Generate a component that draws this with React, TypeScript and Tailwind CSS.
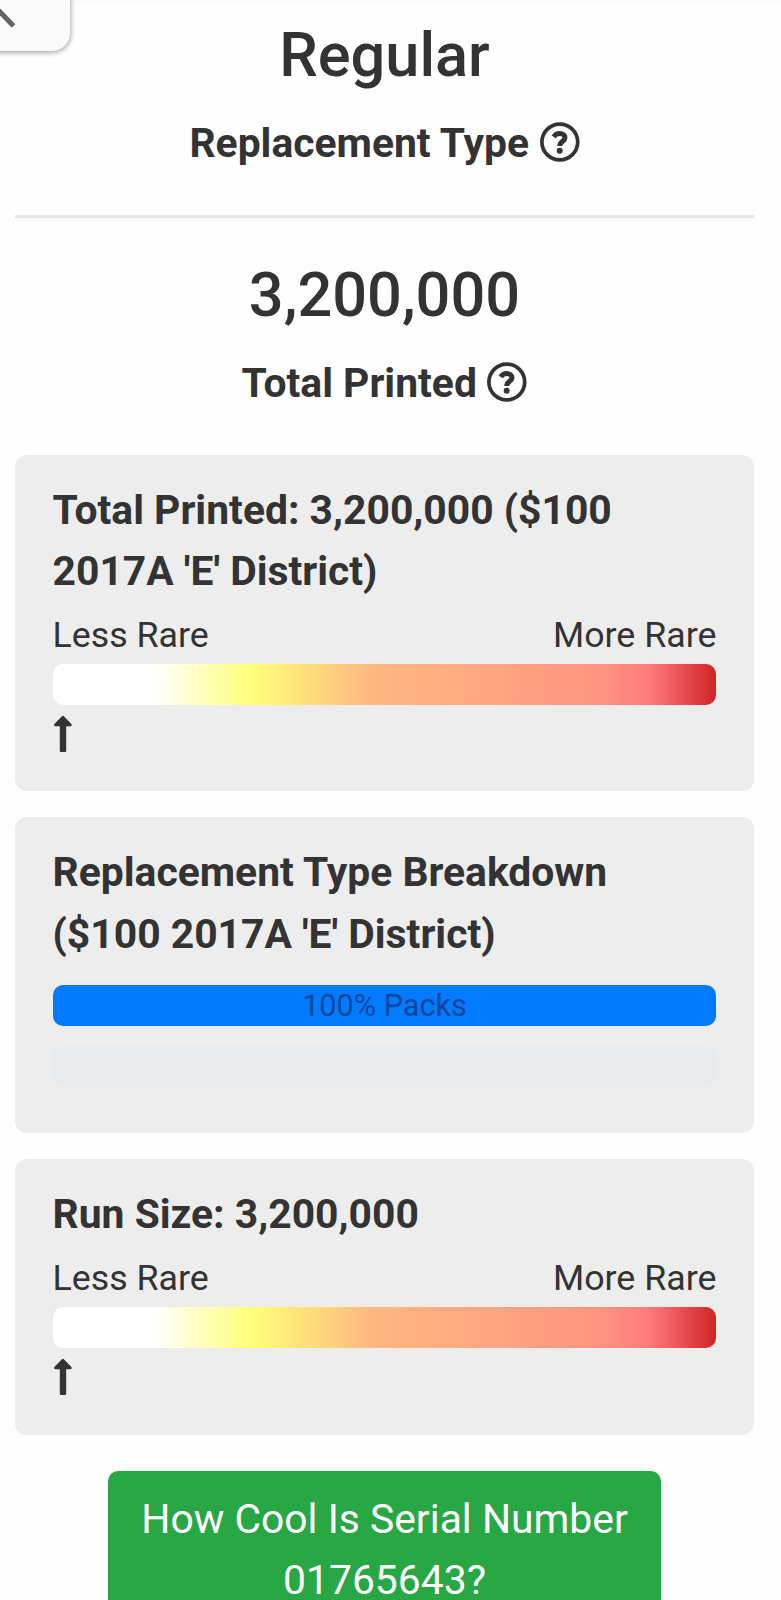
import type { ReactNode } from "react";

function HelpIcon() {
  return (
    <svg className="ml-[10.5px] size-[40px] -translate-y-[2px]" viewBox="0 0 40 40" fill="none" stroke="currentColor">
      <circle cx="19.8" cy="20" r="17.9" strokeWidth="3.7" />
      <path d="M13.7 14.9 C15.2 12.7 17.2 11.6 19.8 11.6 C22.8 11.6 25 13.3 25 15.7 C25 19.3 19.7 19.2 19.7 24" strokeWidth="5" />
      <circle cx="19.7" cy="28.8" r="3" fill="currentColor" stroke="none" />
    </svg>
  );
}

function Pointer() {
  return (
    <svg className="mt-[9px] h-[41px] w-[20px]" viewBox="0 0 20 41" fill="currentColor">
      <path d="M9.2 2 Q9.9 1.3 10.6 2 L18.2 9.8 Q19 10.8 18.6 11.5 Q18.3 12.3 17.4 12.3 H13.2 V37 Q13.2 38 12.2 38 H7.8 Q6.8 38 6.8 37 V12.3 H2.4 Q1.5 12.3 1.2 11.5 Q0.8 10.8 1.6 9.8 Z" />
    </svg>
  );
}

function Stat({ value, label }: { value: string; label: string }) {
  return (
    <div className="flex flex-col items-center">
      <div className="text-[61.3px] leading-[76px] font-medium">{value}</div>
      <div className="mt-[20px] flex items-center text-[40.85px] leading-[61.3px] font-bold">
        <span>{label}</span>
        <HelpIcon />
      </div>
    </div>
  );
}

function Card({ title, children }: { title: string; children: ReactNode }) {
  return (
    <section className="rounded-[12px] bg-[#ededed] px-[38px] pt-[25.3px]">
      <h2 className="text-[40.85px] leading-[61.3px] font-bold">{title}</h2>
      {children}
    </section>
  );
}

function RarityScale() {
  return (
    <>
      <div className="mt-[5.4px] flex justify-between text-[35.75px] leading-[54px]">
        <span>Less Rare</span>
        <span>More Rare</span>
      </div>
      <div className="mt-[2px] h-[41px] rounded-[10px] bg-[linear-gradient(to_right,#ffffff_0%,#ffffff_15%,#ffff78_30%,#ffb880_48%,#ff9480_83%,#ff7a7c_90%,#d02424_100%)]" />
      <Pointer />
    </>
  );
}

export default function App() {
  return (
    <div className="relative h-[1600px] w-[781px] overflow-hidden bg-[#fefefe] font-[Roboto,sans-serif] text-[#333333]">
      <div className="absolute inset-x-0 top-0 h-[5px] bg-linear-to-b from-[#f8f8f8] to-[#fefefe]" />
      <button className="absolute -top-[20px] -left-[20px] h-[71px] w-[90px] rounded-br-[18px] bg-[#fafafa] shadow-[0_1px_5px_1px_rgba(0,0,0,0.33)]">
        <svg className="absolute top-[20px] left-[20px] h-[40px] w-[40px]" viewBox="0 0 40 40" fill="none" stroke="#636363" strokeWidth="5">
          <path d="M-6 5.5 L13.5 26" />
        </svg>
      </button>

      <main className="flex flex-col pr-[26.6px] pl-[14.6px]">
        <div className="pt-[17px]">
          <Stat value="Regular" label="Replacement Type" />
        </div>
        <hr className="mt-[41px] border-0 border-t-[3px] border-[#e6e6e6]" />
        <div className="pt-[38.6px]">
          <Stat value="3,200,000" label="Total Printed" />
        </div>

        <div className="mt-[40.6px] flex flex-col gap-[25.7px]">
          <div className="grid h-[336.7px]">
            <Card title="Total Printed: 3,200,000 ($100 2017A 'E' District)">
              <RarityScale />
            </Card>
          </div>
          <div className="grid h-[316.3px]">
            <Card title="Replacement Type Breakdown ($100 2017A 'E' District)">
              <div className="mt-[20.2px] flex h-[41px] items-center justify-center rounded-[10px] bg-[#007bff] text-[30.6px] leading-[41px] text-[#0b469b]">
                100% Packs
              </div>
              <div className="mt-[20px] h-[41px] rounded-[10px] bg-[#e8ebee]" />
            </Card>
          </div>
          <div className="grid h-[276px]">
            <Card title="Run Size: 3,200,000">
              <RarityScale />
            </Card>
          </div>
        </div>

        <a className="mt-[35.4px] block w-[553px] self-center rounded-t-[10px] bg-[#28a745] px-[30px] pt-[18px] text-center text-[40.85px] leading-[61.3px] text-white">
          How Cool Is Serial Number 01765643?
        </a>
      </main>
    </div>
  );
}
